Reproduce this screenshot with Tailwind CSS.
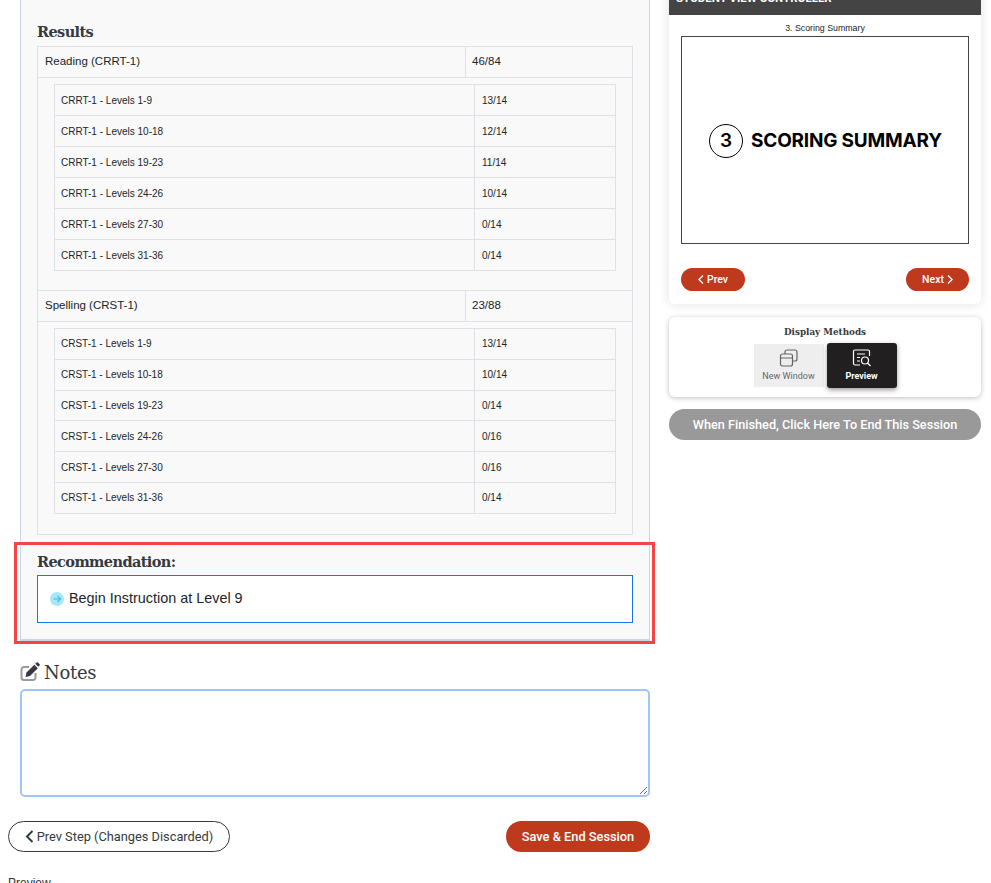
<!DOCTYPE html>
<html lang="en">
<head>
  <meta charset="UTF-8" />
  <title>Session Results</title>
  <script src="https://cdn.jsdelivr.net/npm/@tailwindcss/browser@4"></script>
</head>
<body class="bg-white text-[#212529] font-['Liberation_Sans',sans-serif]">
  <div class="relative h-[883px] w-[991px] overflow-hidden">
    <div class="-mt-[30px] flex items-start">

      <!-- left column -->
      <div class="ml-2 w-[642px] shrink-0">
        <div class="ml-3 border border-b-2 border-[#cbd5e8] bg-[#f9f9f9] px-4 pt-[49px] pb-[16px]">
          <h3 class="mb-[1px] h-[25px] font-['DejaVu_Serif',serif] text-[14.5px] leading-[23px] font-bold tracking-[-0.6px] text-[#343a40]">Results</h3>

          <div class="border border-[#dee2e6]">
            <div class="flex h-[31px] items-center border-b border-[#dee2e6] text-[11.5px]">
              <div class="flex h-full w-[428px] items-center border-r border-[#dee2e6] pl-[7px]">Reading (CRRT-1)</div>
              <div class="pl-[6px]">46/84</div>
            </div>
            <div class="px-4 pt-[6px] pb-[19px]">
              <div class="border border-b-0 border-[#dee2e6] text-[10px]">
                <div class="flex h-[31px] items-center border-b border-[#dee2e6]"><div class="flex h-full w-[420px] items-center border-r border-[#dee2e6] pl-[6px]">CRRT-1 - Levels 1-9</div><div class="pl-[7px]">13/14</div></div>
                <div class="flex h-[31px] items-center border-b border-[#dee2e6]"><div class="flex h-full w-[420px] items-center border-r border-[#dee2e6] pl-[6px]">CRRT-1 - Levels 10-18</div><div class="pl-[7px]">12/14</div></div>
                <div class="flex h-[31px] items-center border-b border-[#dee2e6]"><div class="flex h-full w-[420px] items-center border-r border-[#dee2e6] pl-[6px]">CRRT-1 - Levels 19-23</div><div class="pl-[7px]">11/14</div></div>
                <div class="flex h-[31px] items-center border-b border-[#dee2e6]"><div class="flex h-full w-[420px] items-center border-r border-[#dee2e6] pl-[6px]">CRRT-1 - Levels 24-26</div><div class="pl-[7px]">10/14</div></div>
                <div class="flex h-[31px] items-center border-b border-[#dee2e6]"><div class="flex h-full w-[420px] items-center border-r border-[#dee2e6] pl-[6px]">CRRT-1 - Levels 27-30</div><div class="pl-[7px]">0/14</div></div>
                <div class="flex h-[31px] items-center border-b border-[#dee2e6]"><div class="flex h-full w-[420px] items-center border-r border-[#dee2e6] pl-[6px]">CRRT-1 - Levels 31-36</div><div class="pl-[7px]">0/14</div></div>
              </div>
            </div>
            <div class="flex h-[32px] items-center border-y border-[#dee2e6] text-[11.5px]">
              <div class="flex h-full w-[428px] items-center border-r border-[#dee2e6] pl-[7px]">Spelling (CRST-1)</div>
              <div class="pl-[6px]">23/88</div>
            </div>
            <div class="px-4 pt-[6px] pb-[20px]">
              <div class="border border-b-0 border-[#dee2e6] text-[10px]">
                <div class="flex h-[30.8px] items-center border-b border-[#dee2e6]"><div class="flex h-full w-[420px] items-center border-r border-[#dee2e6] pl-[6px]">CRST-1 - Levels 1-9</div><div class="pl-[7px]">13/14</div></div>
                <div class="flex h-[30.8px] items-center border-b border-[#dee2e6]"><div class="flex h-full w-[420px] items-center border-r border-[#dee2e6] pl-[6px]">CRST-1 - Levels 10-18</div><div class="pl-[7px]">10/14</div></div>
                <div class="flex h-[30.8px] items-center border-b border-[#dee2e6]"><div class="flex h-full w-[420px] items-center border-r border-[#dee2e6] pl-[6px]">CRST-1 - Levels 19-23</div><div class="pl-[7px]">0/14</div></div>
                <div class="flex h-[30.8px] items-center border-b border-[#dee2e6]"><div class="flex h-full w-[420px] items-center border-r border-[#dee2e6] pl-[6px]">CRST-1 - Levels 24-26</div><div class="pl-[7px]">0/16</div></div>
                <div class="flex h-[30.8px] items-center border-b border-[#dee2e6]"><div class="flex h-full w-[420px] items-center border-r border-[#dee2e6] pl-[6px]">CRST-1 - Levels 27-30</div><div class="pl-[7px]">0/16</div></div>
                <div class="flex h-[30.8px] items-center border-b border-[#dee2e6]"><div class="flex h-full w-[420px] items-center border-r border-[#dee2e6] pl-[6px]">CRST-1 - Levels 31-36</div><div class="pl-[7px]">0/14</div></div>
              </div>
            </div>
          </div>

          <h3 class="mt-[15px] h-[25px] font-['DejaVu_Serif',serif] text-[14.5px] leading-[23px] font-bold tracking-[-0.6px] text-[#343a40]">Recommendation:</h3>
          <div class="flex h-[48px] items-center gap-[5px] border border-[#1a73e8] bg-white pl-[12px] text-[14.400px]">
            <svg class="size-[14px] shrink-0" viewBox="0 0 14 14" fill="none"><circle cx="7" cy="7" r="7" fill="#a5e9f9"/><path d="M3.500 7h7M7.500 4l3 3-3 3" stroke="#45b6ea" stroke-width="1.100"/></svg>
            <span>Begin Instruction at Level 9</span>
          </div>
        </div>

        <div class="mt-[17px] ml-3 flex h-[29px] items-center gap-[4px]">
          <svg class="size-[20px] shrink-0" viewBox="0 0 20 20" fill="none">
            <path d="M9 5H4a2.500 2.500 0 0 0-2.500 2.500v8A2.500 2.500 0 0 0 4 18h9a2.500 2.500 0 0 0 2.500-2.500V11" stroke="#9a9a9a" stroke-width="2"/>
            <path d="M5.500 15l1-4.500 7.800-7.800 3.500 3.500L10 14z" fill="#343a40"/>
            <path d="M15.200 1.800l1.300-1.300a1 1 0 0 1 1.400 0l1.600 1.600a1 1 0 0 1 0 1.400l-1.300 1.300z" fill="#343a40"/>
          </svg>
          <span class="font-['DejaVu_Serif',serif] text-[18px] tracking-[-0.3px] text-[#343a40]">Notes</span>
        </div>
        <textarea class="mt-[2px] ml-3 block h-[108px] w-[630px] rounded-[5px] border-2 border-[#a0c6f8] bg-white"></textarea>

        <div class="mt-[24px] flex items-center justify-between font-['Roboto',sans-serif] text-[12.800px]">
          <button class="flex h-[31px] w-[222px] items-center justify-center gap-[3px] rounded-full border border-[#343a40] text-[#343a40]">
            <svg class="h-[13px] w-[9px]" viewBox="0 0 9 13" fill="none"><path d="M7.500 1L2 6.500 7.500 12" stroke="#343a40" stroke-width="2"/></svg>
            Prev Step (Changes Discarded)
          </button>
          <button class="h-[31px] w-[144px] rounded-full bg-[#bf3a1d] font-medium text-white">Save &amp; End Session</button>
        </div>

        <p class="mt-[24px] text-[12px] leading-[14px] text-[#333]">Preview</p>
      </div>

      <!-- right column -->
      <div class="ml-[19px] w-[312px] shrink-0">
        <div class="rounded-b-md bg-white pb-[13px] shadow-[0_0_12px_rgba(0,0,0,0.12)]">
          <div class="flex h-[45px] items-end bg-[#444] px-[7px] pb-[9px] font-['Roboto',sans-serif] text-[11.500px] leading-[16px] font-bold text-white">STUDENT VIEW CONTROLLER</div>
          <p class="mt-[6px] h-[15px] text-center text-[8.800px] leading-[15px]">3. Scoring Summary</p>
          <div class="mx-3 flex h-[208px] items-center justify-center gap-[8px] border border-[#444] bg-white pt-[2px] pl-[1px]">
            <div class="flex size-[34px] items-center justify-center rounded-full border border-black font-['Inter',sans-serif] text-[19px] font-semibold text-black">3</div>
            <span class="font-['Inter',sans-serif] text-[19px] font-bold tracking-[-0.2px] text-black">SCORING SUMMARY</span>
          </div>
          <div class="mx-3 mt-[24px] flex justify-between font-['Roboto',sans-serif] text-[10.500px] font-medium text-white">
            <button class="flex h-[23px] w-[64px] items-center justify-center gap-[3px] rounded-full bg-[#bf3a1d]">
              <svg class="h-[9px] w-[6px]" viewBox="0 0 6 9" fill="none"><path d="M5 .5L1 4.500 5 8.500" stroke="#fff" stroke-width="1.400"/></svg>Prev
            </button>
            <button class="flex h-[23px] w-[63px] items-center justify-center gap-[3px] rounded-full bg-[#bf3a1d]">Next
              <svg class="h-[9px] w-[6px]" viewBox="0 0 6 9" fill="none"><path d="M1 .5L5 4.500 1 8.500" stroke="#fff" stroke-width="1.400"/></svg>
            </button>
          </div>
        </div>

        <div class="mt-[13px] h-[80px] rounded-md bg-white pt-[8px] shadow-[0_1px_5px_rgba(0,0,0,0.25)]">
          <p class="h-[18px] text-center font-['DejaVu_Serif',serif] text-[8.800px] leading-[14px] font-bold text-[#343a40]">Display Methods</p>
          <div class="flex justify-center gap-[3px] font-['Roboto',sans-serif] text-[9px]">
            <button class="mt-[1px] flex h-[43px] w-[70px] flex-col items-center justify-center bg-[#eee] text-[#666]">
              <svg class="mb-[2px] size-[20px]" viewBox="0 0 20 20" fill="none" stroke="#666" stroke-width="1.200"><rect x="1.500" y="6" width="12" height="12" rx="2"/><path d="M1.500 10h12M6 6V4a2 2 0 0 1 2-2h8a2 2 0 0 1 2 2v7a2 2 0 0 1-2 2h-2.500"/></svg>
              New Window
            </button>
            <button class="flex h-[45px] w-[70px] flex-col items-center justify-center rounded-[3px] bg-[#221f20] font-bold text-white shadow-[0_2px_5px_rgba(0,0,0,0.4)]">
              <svg class="mb-[2px] size-[20px]" viewBox="0 0 20 20" fill="none" stroke="#fff" stroke-width="1.200"><path d="M8 17H3a1.500 1.500 0 0 1-1.500-1.500v-12A1.500 1.500 0 0 1 3 2h13a1.500 1.500 0 0 1 1.500 1.500V8M5 6h8M5 9.500h3M5 13h3"/><circle cx="13" cy="12.500" r="3.500"/><path d="M15.500 15l3 3"/></svg>
              Preview
            </button>
          </div>
        </div>

        <button class="mt-[12px] h-[31px] w-[312px] rounded-full bg-[#999] font-['Roboto',sans-serif] text-[12.700px] font-medium text-white">When Finished, Click Here To End This Session</button>
      </div>
    </div>

    <!-- highlight box laid over the recommendation -->
    <div class="absolute top-[542px] left-[14px] h-[102px] w-[641px] border-[3px] border-[#f44444]"></div>
  </div>
</body>
</html>
